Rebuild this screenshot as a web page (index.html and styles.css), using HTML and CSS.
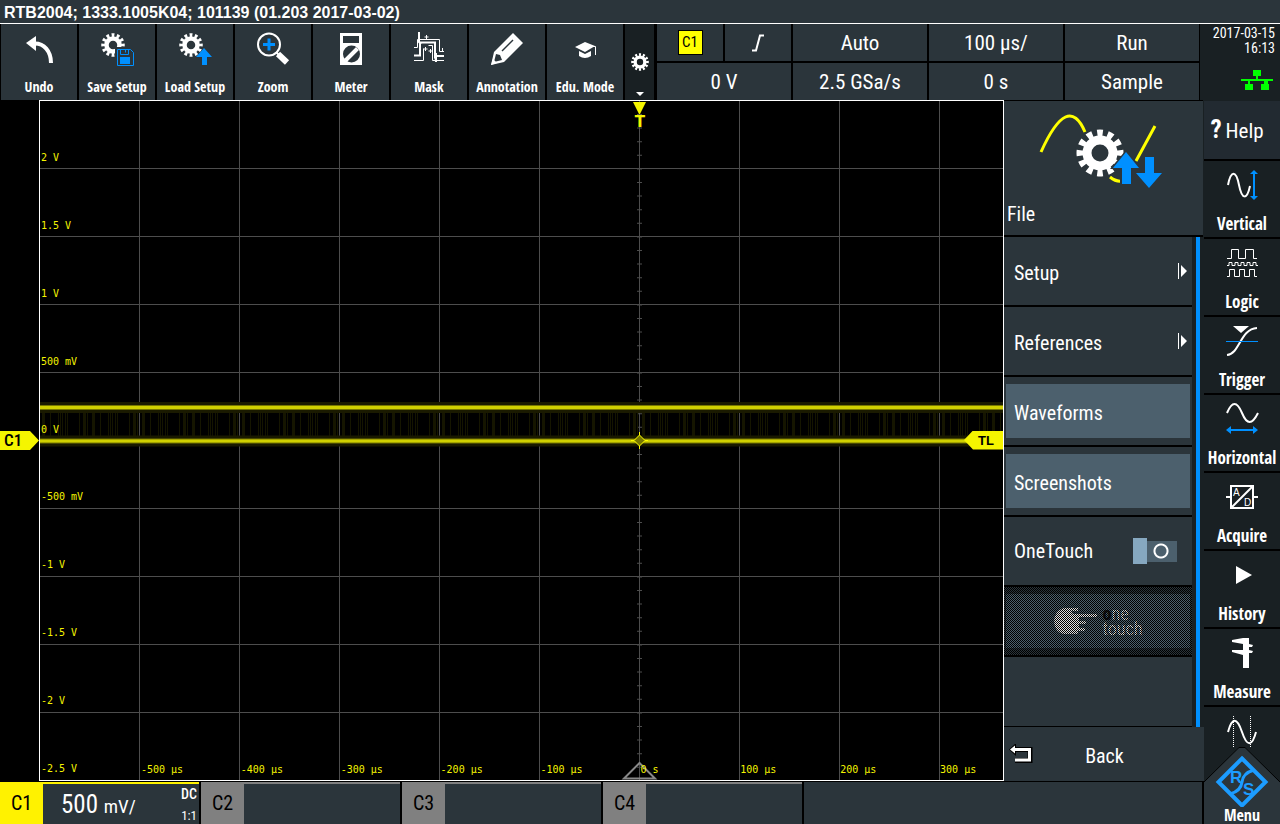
FILE: index.html
```html
<!DOCTYPE html>
<html lang="en">
<head>
<meta charset="utf-8">
<title>RTB2004 Oscilloscope</title>
<link rel="stylesheet" href="styles.css">
</head>
<body>
<svg class="defs" aria-hidden="true">
  <symbol id="gear" viewBox="-24 -24 48 48">
    <circle r="13" fill="none" stroke="#fff" stroke-width="9"/>
    <circle r="19" fill="none" stroke="#fff" stroke-width="9" pathLength="120" stroke-dasharray="5.4 4.6" stroke-dashoffset="2.7"/>
  </symbol>
</svg>
<header class="title">RTB2004; 1333.1005K04; 101139 (01.203 2017-03-02)</header>

<div class="top">
  <nav class="tools">
    <button class="tool"><svg class="icon" viewBox="0 0 36 36"><path d="M5 12 15 5v15z" fill="#fff"/><path d="M13 12.500C23 12 30 20 30 32" fill="none" stroke="#fff" stroke-width="4"/></svg>Undo</button>
    <button class="tool"><svg class="icon" viewBox="0 0 36 36"><use href="#gear" x="2" y="2" width="24" height="24"/><path d="M16 16h20v20H16z" fill="#2b353b"/><path d="M18.500 18.500h13l3 3v13h-16zM21.500 18.500v5h8v-5M26.500 18.500v3" fill="none" stroke="#0090ff"/><path d="M21 26h10v7H21z" fill="#0090ff"/></svg>Save Setup</button>
    <button class="tool"><svg class="icon" viewBox="0 0 36 36"><use href="#gear" x="2" y="2" width="24" height="24"/><path d="M27 17l8 9h-5v8h-5v-8h-6z" fill="#0090ff" stroke="#2b353b" stroke-width="1" paint-order="stroke"/></svg>Load Setup</button>
    <button class="tool"><svg class="icon" viewBox="0 0 36 36"><circle cx="14" cy="13.500" r="11" fill="none" stroke="#fff" stroke-width="2"/><path d="M8 13.500h12M14 7.500v12" stroke="#0090ff" stroke-width="3"/><path d="M21 21l3 3" stroke="#fff" stroke-width="2"/><path d="M23 23l9 8.500" stroke="#fff" stroke-width="6"/></svg>Zoom</button>
    <button class="tool"><svg class="icon" viewBox="0 0 36 36"><path d="M7 2h22v32H7z" fill="#fff"/><path d="M10 5h16v7H10z" fill="#2b353b"/><circle cx="18.500" cy="23" r="8.500" fill="#2b353b"/><path d="M12.500 29.500l12-12" stroke="#fff" stroke-width="4"/></svg>Meter</button>
    <button class="tool"><svg class="icon" viewBox="0 0 36 36"><g fill="none" stroke="#fff"><path d="M3 16.500h3.500V8.500h22v12H33M3 29.500h9.500V17.500M17.500 14.500h4v15H33"/><path d="M3 24.500h6V11.500h15v16M24 25h9" stroke-width="2"/><path d="M8 1v10l2 2" stroke-width="2"/><path d="M15.500 4v4M13.500 6h4M14.500 16v4M12.500 18h4M19.500 18v4M17.500 20h4M31.500 17v3"/></g><path d="M23 22h3v9h-2z" fill="#fff"/></svg>Mask</button>
    <button class="tool"><svg class="icon" viewBox="0 0 36 36"><path d="M2 34 5 21 24 2 34 12 15 31z" fill="#fff"/><path d="M5 31l2-8 4 1 2 5z" fill="#2b353b"/><path d="M2 34l2-6 4 4z" fill="#fff"/><path d="M13 20 24 9" stroke="#2b353b" stroke-width="1.500"/></svg>Annotation</button>
    <button class="tool"><svg class="icon" viewBox="0 0 36 36"><path d="M8 16l10-5 10 4-10 6z" fill="#fff"/><path d="M12 20l6 3 6-3v5q-6 4-12 0z" fill="#fff"/><path d="M18 15.500h10.500V24" fill="none" stroke="#fff"/></svg>Edu. Mode</button>
    <button class="more" aria-label="Toolbar settings"><svg class="more-icon" viewBox="0 0 28 76"><use href="#gear" x="5" y="29" width="18" height="18"/><path d="M10 68h8l-4 4z" fill="#fff"/></svg></button>
  </nav>
  <div class="status">
    <button class="cell"><span class="source">C1</span></button>
    <button class="cell" aria-label="Rising edge"><svg class="edge" viewBox="0 0 14 18"><path d="M1 16.500h4L9 1.500h4" fill="none" stroke="#fff" stroke-width="2"/></svg></button>
    <button class="cell">Auto</button>
    <button class="cell">100 µs/</button>
    <button class="cell">Run</button>
    <button class="cell wide">0 V</button>
    <button class="cell">2.5 GSa/s</button>
    <button class="cell">0 s</button>
    <button class="cell">Sample</button>
  </div>
  <div class="clock"><span>2017-03-15</span><span>16:13</span>
    <svg class="lan" viewBox="0 0 32 20"><path d="M12 0h8v6h-3v3h15v2h-5v3h1v6h-8v-6h3v-3H9v3h3v6H4v-6h3v-3H0V9h15V6h-3z" fill="#0f0"/></svg>
  </div>
</div>

<div class="body">
  <div class="work">
    <div class="upper">
      <div class="gutter"><span class="ch-mark">C1</span></div>
      <main class="plot">
        <svg class="grid" viewBox="0 0 963 679" preserveAspectRatio="none">
          <defs><pattern id="edges" width="50" height="40" patternUnits="userSpaceOnUse"><path d="M2 0h3v40H2zM10 0h1v40h-1zM18 0h1v40h-1zM20 0h1v40h-1zM22 0h1v40h-1zM25 0h1v40h-1zM27 0h1v40h-1zM39 0h1v40h-1zM43 0h3v40h-3zM47 0h1v40h-1z" fill="#151500"/></pattern></defs>
          <path d="M99.500 0v679M199.500 0v679M299.500 0v679M399.500 0v679M499.500 0v679M599.500 0v679M699.500 0v679M799.500 0v679M899.500 0v679M0 67.500h963M0 135.500h963M0 203.500h963M0 271.500h963M0 339.500h963M0 407.500h963M0 475.500h963M0 543.500h963M0 611.500h963" stroke="#4d4d4d"/>
          <path d="M599.500 13v666" stroke="#4d4d4d" stroke-width="5" stroke-dasharray="1 12.600"/>
          <path d="M0 302h963v39H0z" fill="url(#edges)"/>
          <path d="M0 306.500h963M0 340h963" stroke="#1a1a00" stroke-width="11"/>
          <path d="M0 306.500h963M0 340h963" stroke="#777700" stroke-width="5"/>
          <path d="M0 306.500h963M0 340h963" stroke="#d0d000" stroke-width="3"/>
          <path d="M593 1h13l-6 12h-1z" fill="#f5f500"/>
          <path d="M594 339.500l5.500-5.500 5.500 5.500-5.500 5.500z" fill="#777700" stroke="#ffff00"/><path d="M591 339.500h3M605 339.500h3M599.500 331v3M599.500 345v3" stroke="#ffff00"/>
          <path d="M584 677.500 599.500 662 615 677.500z" fill="none" stroke="#888" stroke-width="2"/>
        </svg>
        <div class="ylabels"><span>2 V</span><span>1.5 V</span><span>1 V</span><span>500 mV</span><span>0 V</span><span>-500 mV</span><span>-1 V</span><span>-1.5 V</span><span>-2 V</span><span>-2.5 V</span></div>
        <div class="xlabels"><span></span><span>-500 µs</span><span>-400 µs</span><span>-300 µs</span><span>-200 µs</span><span>-100 µs</span><span>0 s</span><span>100 µs</span><span>200 µs</span><span>300 µs</span></div>
        <span class="trig">T</span>
        <span class="level">TL</span>
      </main>
      <aside class="menu">
        <div class="menu-head">
          <svg class="file-icon" viewBox="0 2 199 100"><path d="M37 52Q64-8 81 32M106 77q6 5 12 4M132 61l19-35" fill="none" stroke="#ff0" stroke-width="3"/><circle cx="96" cy="53" r="25" fill="#2b353b"/><use href="#gear" x="72" y="29" width="48" height="48"/><path d="M122 50l16 19h-5v20h-17V69H106z" fill="#2b353b"/><path d="M122 52l13 16h-8v16h-9V68h-9zM145 88l13-15h-8V57h-9v16h-9z" fill="#0090ff"/></svg>
          <h1>File</h1>
        </div>
        <div class="menu-body">
          <div class="items">
            <button class="item"><span class="name">Setup</span><svg class="sub" viewBox="0 0 9 16"><path d="M0 0h1v16H0zM3 2l6 6-6 6z" fill="#fff"/></svg></button>
            <button class="item"><span class="name">References</span><svg class="sub" viewBox="0 0 9 16"><path d="M0 0h1v16H0zM3 2l6 6-6 6z" fill="#fff"/></svg></button>
            <div class="slot"><button class="action"><span class="name">Waveforms</span></button></div>
            <div class="slot"><button class="action"><span class="name">Screenshots</span></button></div>
            <label class="item">OneTouch<input class="toggle" type="checkbox"></label>
            <div class="slot off"><button class="action one" disabled><svg class="hand" viewBox="0 0 44 28"><path d="M10 1h14v3h-7l2 3h24v3H25v4h7v3h-7v4h6v3h-7v3H10C-3 25-3 4 10 1z" fill="#ddd"/></svg><span><b>o</b>ne<br>touch</span></button></div>
            <div class="blank"></div>
          </div>
          <div class="scroll"></div>
        </div>
        <button class="back"><svg class="back-icon" viewBox="0 0 24 20"><path d="M5 5.500h16v11H6" fill="none" stroke="#000" stroke-width="5"/><path d="M0 5.500 7-1v13z" fill="#000"/><path d="M5 5.500h15.500v10.500H6" fill="none" stroke="#fff" stroke-width="3"/><path d="M1 5.500l5-4v8z" fill="#fff"/></svg><span>Back</span></button>
      </aside>
    </div>
    <footer class="channels">
      <button class="channel on"><b>C1</b><span class="scale">500 <small>mV/</small></span><span class="probe"><span>DC</span><span class="ratio">1:1</span></span></button>
      <button class="channel"><b>C2</b></button>
      <button class="channel"><b>C3</b></button>
      <button class="channel"><b>C4</b></button>
      <div class="rest"></div>
    </footer>
  </div>
  <nav class="side">
    <button class="help"><span class="mark">?</span>Help</button>
    <button class="key"><svg class="icon" viewBox="0 0 36 36"><path d="M4 18C7 3 12 3 15 18s8 15 11 1" fill="none" stroke="#fff" stroke-width="2"/><path d="M30 3l4 4h-3v22h3l-4 4-4-4h3V7h-3z" fill="#0090ff"/></svg>Vertical</button>
    <button class="key"><svg class="icon" viewBox="0 0 36 36"><path d="M3 13.500h4.500v-9h7v9h7v-9h8v9H33M3 20.500h2v-3h3v3h3v-3h3v3h3v-3h3v3h3v-3h3v3h3v-3h3v3h2M3 31.500h2.500v-7h5v7h5v-7h5v7h5v-7h5v7H33" fill="none" stroke="#fff"/></svg>Logic</button>
    <button class="key"><svg class="icon" viewBox="0 0 36 36"><path d="M9 3h16l-8 7z" fill="#fff"/><path d="M3 32C16 31 16 6 33 5" fill="none" stroke="#fff" stroke-width="2"/><path d="M2 18.500h32" stroke="#0090ff"/></svg>Trigger</button>
    <button class="key"><svg class="icon" viewBox="0 0 36 36"><path d="M3 12C8 0 13 0 18 12s10 12 16 0" fill="none" stroke="#fff" stroke-width="2"/><path d="M2 29l5-4v3h22v-3l5 4-5 4v-3H7v3z" fill="#0090ff"/></svg>Horizontal</button>
    <button class="key"><svg class="icon" viewBox="0 0 36 36"><path d="M7 7h22v22H7zM7 29 29 7M2 18h5M29 18h5" fill="none" stroke="#fff" stroke-width="2"/><text x="9" y="17" class="ad">A</text><text x="20" y="27" class="ad">D</text></svg>Acquire</button>
    <button class="key"><svg class="icon" viewBox="0 0 36 36"><path d="M12 9v18l16-9z" fill="#fff"/></svg>History</button>
    <button class="key"><svg class="icon" viewBox="0 0 36 36"><path d="M8 5l11-2h6v6l4 1-1 2h-3v3l4 1-1 2h-3v15h-6V20L8 17v-2h11V9L8 7z" fill="#fff"/></svg>Measure</button>
    <button class="key last" aria-label="Cursor"><svg class="icon" viewBox="0 0 36 36"><path d="M4 19C8 4 13 4 18 19s10 15 14 0" fill="none" stroke="#fff" stroke-width="2"/><path d="M9.500 3v31M26.500 3v31" stroke="#fff" stroke-dasharray="1 1"/></svg></button>
    <button class="home"><svg class="logo" viewBox="0 0 76 60"><path d="M0 60V35L35 0h6l35 35v25z" fill="#2b353b"/><path d="M0 35 35 0.500h6L76 35" fill="none" stroke="#000"/><path d="M38 11.500 61.500 35 38 58.500 14.500 35z" fill="none" stroke="#1c9cff" stroke-width="4"/><path d="M26 47Q37 44 38 35T50 23" fill="none" stroke="#1c9cff" stroke-width="3"/><text x="26" y="36" class="rs">R</text><text x="39" y="48" class="rs">S</text></svg>Menu</button>
  </nav>
</div>
</body>
</html>
```
FILE: styles.css
```css
* { box-sizing: border-box; }
html, body { margin: 0; }
body {
  display: flex; flex-direction: column; min-height: 100vh;
  background: #000; color: #fff;
  font: 20px/24px "Roboto Condensed", "Open Sans Condensed", "Noto Sans", sans-serif;
}
button {
  appearance: none; border: 0; margin: 0; padding: 0; border-radius: 0;
  background: #2b353b; color: inherit; font: inherit;
}
.defs { position: absolute; width: 0; height: 0; }
.title {
  height: 24px; padding: 1px 4px 0; border-bottom: 1px solid #fff;
  background: #2b353b; font: bold 16px/23px "Liberation Sans", sans-serif;
}
.top { display: grid; grid-template-columns: minmax(0, 656fr) minmax(0, 544fr) minmax(0, 80fr); height: 76px; }
.tools { display: flex; gap: 2px; padding: 0 2px 0 1px; }
.tool {
  display: flex; flex: 76 1 0; min-width: 0; flex-direction: column; align-items: center;
  gap: 8px; padding-top: 7px; white-space: nowrap;
  font: bold 14px/24px "Open Sans Condensed", "Roboto Condensed", sans-serif;
}
.icon { width: 36px; height: 36px; flex: none; }
.more { flex: 29 1 0; background: #192023; display: flex; justify-content: center; }
.more-icon { width: 28px; height: 76px; }
.status {
  display: grid; gap: 2px; padding: 0 1px; font-size: 21px;
  grid-template-columns: 66fr 66fr 134fr 134fr 134fr; grid-template-rows: 37fr 37fr;
}
.cell { display: flex; align-items: center; justify-content: center; }
.wide { grid-column: span 2; }
.source {
  width: 25px; height: 25px; border: 1px solid #000; background: #ff0; color: #000;
  font-size: 15px; line-height: 23px;
}
.edge { width: 14px; height: 18px; }
.clock {
  display: flex; flex-direction: column; align-items: flex-end;
  padding: 2px 5px 0 0; background: #192023; font-size: 14px; line-height: 15px;
}
.lan { width: 32px; height: 20px; margin-top: 14px; margin-right: 2px; }

.body { display: flex; flex: 1; }
.work { display: flex; flex-direction: column; flex: 1; min-width: 0; }
.upper { display: flex; flex: 1; }
.gutter { display: flex; align-items: center; width: 39px; }
.ch-mark {
  width: 39px; padding-left: 4px; background: #f5f500; color: #000; font-size: 17px; font-weight: 500; line-height: 19px;
  clip-path: polygon(0 0, 30px 0, 100% 50%, 30px 100%, 0 100%);
}
.plot { position: relative; flex: 1; border: 1px solid #fff; color: #f5f500; font: 10px/12px "DejaVu Sans Mono", monospace; }
.grid { position: absolute; inset: 0; width: 100%; height: 100%; }
.ylabels { position: absolute; inset: 0; display: grid; grid-template-rows: repeat(10, 1fr); align-items: end; }
.ylabels span { padding: 0 0 5px 1px; }
.xlabels { position: absolute; left: 0; right: 0; bottom: 4px; display: grid; grid-template-columns: repeat(9, 100fr) 64fr; }
.xlabels span { padding-left: 1px; white-space: nowrap; min-width: 0; }
.trig { position: absolute; left: calc(62.3% - 8px); top: 14px; width: 16px; text-align: center; font: bold 15px/15px "DejaVu Sans", sans-serif; }
.level {
  position: absolute; right: 0; top: calc(50% - 10px); width: 39px; height: 19px; padding-left: 14px;
  background: #f5f500; color: #000; clip-path: polygon(0 50%, 9px 0, 100% 0, 100% 100%, 9px 100%);
  font: bold 13px/19px "Liberation Sans", sans-serif;
}
.menu { display: flex; flex-direction: column; width: 200px; background: #192023; }
.menu-head { height: 137px; margin-right: 1px; padding-top: 1px; background: #2b353b; border-top: 1px solid #000; border-bottom: 2px solid #000; }
.menu-head h1 { margin: 0; padding-left: 3px; font: inherit; }
.file-icon { display: block; width: 199px; height: 100px; }
.menu-body { display: flex; flex: 1; }
.items { display: flex; flex-direction: column; flex: 1; }
.item, .slot { display: flex; align-items: center; height: 70px; border-bottom: 2px solid #000; background: #2b353b; }
.item { justify-content: space-between; padding: 0 5px 0 10px; text-align: left; }
.name { display: block; padding-top: 4px; }
.sub { width: 9px; height: 16px; }
.slot { padding: 0 2px; }
.action { width: 100%; height: 54px; padding: 0 8px; background: #4c606d; text-align: left; }
.toggle {
  appearance: none; width: 44px; height: 26px; margin: 0 10px 0 0;
  background: radial-gradient(circle 8px at 28px 13px, transparent 5px, #fff 6px, #fff 7px, transparent 8px),
    linear-gradient(90deg, #86a8c0 14px, transparent 14px),
    linear-gradient(transparent 3px, #4c606d 3px, #4c606d 24px, transparent 24px);
}
.off { position: relative; }
.off::after { content: ""; position: absolute; inset: 0; background: repeating-conic-gradient(#000 0 25%, transparent 0 50%) 0 0 / 2px 2px; }
.one { display: flex; align-items: center; justify-content: center; gap: 5px; color: #ddd; line-height: 15px; font-size: 18px; }
.one b { color: #111; }
.hand { width: 44px; height: 28px; }
.blank { flex: 1; background: #2b353b; border-bottom: 1px solid #000; }
.scroll { width: 4px; margin: 0 4px; background: #0090ff; }
.back { display: flex; align-items: center; height: 54px; padding-left: 5px; }
.back span { flex: 1; padding: 3px 28px 0 0; }
.back-icon { width: 24px; height: 20px; }

.channels { display: grid; grid-template-columns: repeat(4, 1fr) 2fr; gap: 2px; height: 43px; padding: 1px 2px 0 0; }
.channel { display: flex; border-top: 2px solid #808080; min-width: 0; }
.channel b { width: 43px; align-self: stretch; background: #808080; color: #000; font-weight: normal; line-height: 38px; }
.channel.on { border-color: #fff200; }
.channel.on b { background: #fff200; }
.scale { flex: 1; padding-left: 18px; text-align: left; font-size: 25px; line-height: 42px; white-space: nowrap; }
.scale small { font-size: 19px; }
.probe { display: flex; flex-direction: column; align-items: flex-end; padding: 0 2px; font-size: 14px; line-height: 21px; font-weight: 500; }
.ratio { font-weight: normal; font-size: 13px; }
.rest { background: #2b353b; }

.side {
  display: flex; flex-direction: column; width: 76px; background: #192023; padding-top: 1px;
  font: bold 17px/24px "Open Sans Condensed", "Roboto Condensed", sans-serif;
}
.help { height: 60px; padding-right: 10px; border-bottom: 2px solid #000; background: #222a31; font: 21px/24px "Roboto Condensed", sans-serif; }
.mark { font-weight: bold; font-size: 25px; padding-right: 4px; }
.key { display: flex; flex-direction: column; align-items: center; gap: 9px; height: 78px; padding-top: 6px; border-bottom: 2px solid #000; background: #192023; }
.last { height: 40px; border: 0; overflow: hidden; }
.home { display: flex; flex-direction: column; align-items: center; flex: 1; font-size: 16px; line-height: 16px; }
.logo { width: 76px; height: 60px; background: #192023; }
.ad { font: 10px "Liberation Sans", sans-serif; fill: #fff; }
.rs { font: bold 17px "Liberation Sans", sans-serif; fill: #1c9cff; }
```
